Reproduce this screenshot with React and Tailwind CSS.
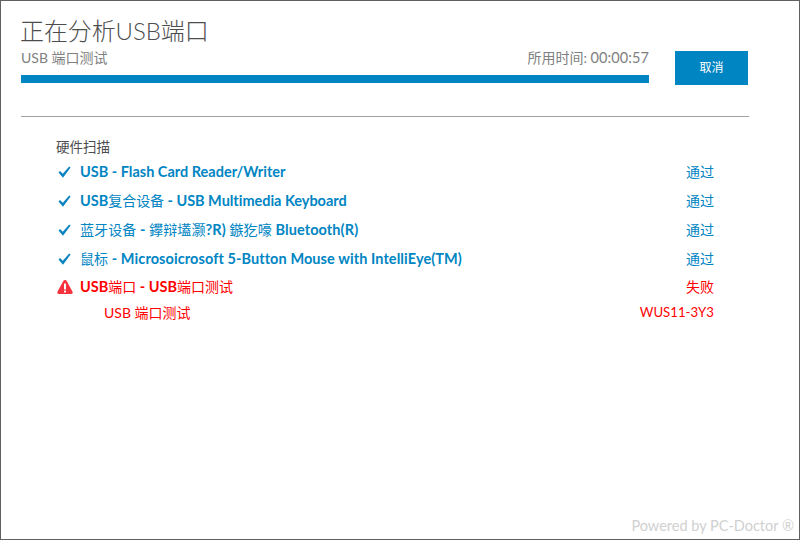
const cjk = '"Lato","Noto Sans CJK SC",sans-serif';

function Check() {
  return (
    <svg width="13" height="12" viewBox="0 0 13 12" className="block">
      <path d="M0.5 6.6 L2 5 L4.8 7.8 L11.2 0.5 L12.6 1.6 L5 11.8 Z" fill="#0a84c1" />
    </svg>
  );
}

function Warn() {
  return (
    <svg width="16" height="16" viewBox="0 0 16 16" className="block">
      <path d="M8 1 Q9.2 1 10 2.4 L15.4 12.4 Q16.4 15 14 15 L2 15 Q-0.4 15 0.6 12.4 L6 2.4 Q6.8 1 8 1 Z" fill="#f5333f" />
      <rect x="7" y="4.5" width="2" height="6" rx="0.5" fill="#fff" />
      <rect x="7" y="11.5" width="2" height="2" rx="0.5" fill="#fff" />
    </svg>
  );
}

const Z = ({ children }) => <span className="font-normal text-[14px]">{children}</span>;

const rows = [
  { t: <>USB - Flash Card Reader/Writer</>, c: '' },
  { t: <>USB<Z>复合设备</Z> - USB Multimedia Keyboard</>, c: 'tracking-[-0.03px]' },
  { t: <><Z>蓝牙设备</Z> - <Z>鑻辩壒灏</Z>?R) <Z>鏃犵嚎</Z> Bluetooth(R)</>, c: 'tracking-[0.1px]' },
  { t: <><Z>鼠标</Z> - Microsoicrosoft 5-Button Mouse with IntelliEye(TM)</>, c: 'tracking-[0.08px]' },
];

export default function App() {
  return (
    <div className="w-[800px] h-[540px] bg-white border border-[#606060] flex flex-col relative overflow-hidden" style={{ fontFamily: cjk }}>
      <div className="pl-5 pr-[51px] flex flex-col">
        <h1 className="text-[24px] leading-[30px] mt-[15px] -ml-px tracking-[-0.1px] text-[#4d4d4d] font-light">正在分析USB端口</h1>
        <div className="flex items-start">
          <div className="w-[628px]">
            <div className="flex justify-between text-[14px] leading-5 mt-[2px] text-[#808080]">
              <span>USB 端口测试</span>
              <span>所用时间: <span className="text-[14.5px] tracking-[0.1px]">00:00:57</span></span>
            </div>
            <div className="h-2 bg-[#0085c3] mt-[7px]" />
          </div>
          <button className="w-[73px] h-[34px] mt-[5px] ml-[26px] bg-[#0085c3] text-white text-[12px]">取消</button>
        </div>
        <div className="h-px bg-[#a0a0a0] mt-[31px] w-[728px]" />
      </div>
      <div className="pl-[55px] pr-[85px] mt-[12px] text-[14px]">
        <div className="h-[28px] leading-[36px] text-[#4d4d4d] text-[13.5px]">硬件扫描</div>
        {rows.map((r, i) => (
          <div key={i} className="h-[29px] flex items-center text-[#0085c3]">
            <span className="w-[24px] pl-[2px] shrink-0"><Check /></span>
            <span className={`font-bold flex-1 text-[14.5px] ${r.c}`}>{r.t}</span>
            <span>通过</span>
          </div>
        ))}
        <div className="h-[27px] flex items-center text-[#ff0000]">
          <span className="w-[24px] pl-[1px] shrink-0"><Warn /></span>
          <span className="font-bold flex-1 text-[14.5px]">USB<Z>端口</Z> - USB<Z>端口测试</Z></span>
          <span>失败</span>
        </div>
        <div className="h-[25px] flex items-center text-[#ff0000] pl-[48px]">
          <span className="flex-1">USB 端口测试</span>
          <span className="text-[13.2px] leading-[27px]">WUS11-3Y3</span>
        </div>
      </div>
      <div className="mt-auto mb-[2px] mr-[5px] text-right text-[14.5px] text-[#d0d0d0]">Powered by PC-Doctor ®</div>
    </div>
  );
}
